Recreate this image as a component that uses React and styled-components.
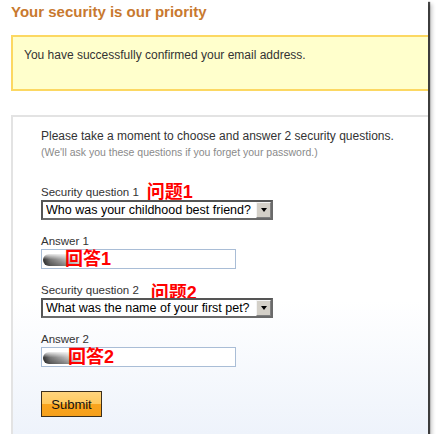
import React from "react";
import styled, { createGlobalStyle } from "styled-components";

const Global = createGlobalStyle`
  html, body { margin: 0; padding: 0; background: #ffffff; }
  body { font-family: "Liberation Sans", Arial, sans-serif; }
  * { box-sizing: border-box; }
`;

const Frame = styled.div`
  width: 428px;
  height: 434px;
  background: #fff;
  overflow: hidden;
  display: flex;
  flex-direction: column;
  box-shadow: 2px 2px 1px rgba(0,0,0,0.7), 4px 4px 4px rgba(0,0,0,0.22);
`;

const Title = styled.h1`
  margin: 0;
  padding: 2px 0 0 11px;
  font-size: 15px;
  line-height: 19px;
  font-weight: bold;
  color: #c8792f;
`;

const Notice = styled.div`
  margin: 14px -20px 0 11px;
  height: 56px;
  border: 2px solid #fcd862;
  background: #ffffcc;
  padding: 11px 11px 0 11px;
  font-size: 12px;
  line-height: 15px;
  color: #333;
`;

const FormBox = styled.form`
  flex: 1;
  margin: 24px -20px 0 11px;
  border-top: 2px solid #e3e3e3;
  border-left: 2px solid #e3e3e3;
  background: linear-gradient(to bottom, #ffffff 0%, #ffffff 58%, #eef3fb 100%);
  padding: 12px 0 0 28px;
  display: flex;
  flex-direction: column;
  align-items: flex-start;
`;

const Intro = styled.p`
  margin: 0;
  font-size: 12px;
  line-height: 15px;
  color: #333;
`;

const Note = styled.p`
  margin: 2px 0 0 0;
  font-size: 10.5px;
  line-height: 13px;
  color: #8a8a8a;
`;

const Field = styled.div`
  display: flex;
  flex-direction: column;
  align-items: flex-start;
  margin-top: ${p => p.$gap}px;
`;

const Label = styled.label`
  display: flex;
  align-items: center;
  height: 13px;
  font-size: 11.5px;
  line-height: 13px;
  color: #333;
`;

const Annotation = styled.span`
  font-family: "Liberation Sans", "Noto Sans CJK SC", sans-serif;
  font-weight: bold;
  font-size: 18px;
  line-height: 13px;
  color: #ff0000;
  margin-left: ${p => p.$shift}px;
  transform: translateY(${p => p.$drop}px);
`;

const SelectWrap = styled.div`
  position: relative;
  margin-top: 1px;
`;

const Select = styled.select`
  appearance: none;
  -webkit-appearance: none;
  width: 232px;
  height: 20px;
  margin: 0;
  padding: 0 0 0 3px;
  border: 2px solid #555;
  border-right-color: #6a6a6a;
  border-bottom-color: #6a6a6a;
  border-radius: 0;
  background: #fff;
  font-family: "Liberation Sans", Arial, sans-serif;
  font-size: 12.5px;
  color: #000;
  outline: none;
`;

const ArrowButton = styled.span`
  position: absolute;
  top: 2px;
  right: 2px;
  width: 15px;
  height: 16px;
  background: #d4d0c8;
  border-top: 1px solid #f4f4f4;
  border-left: 1px solid #f4f4f4;
  border-right: 1px solid #808080;
  border-bottom: 1px solid #808080;
  pointer-events: none;
  display: flex;
  align-items: center;
  justify-content: center;
  &::after {
    content: "";
    width: 0;
    height: 0;
    border-left: 3.5px solid transparent;
    border-right: 3.5px solid transparent;
    border-top: 4px solid #000;
  }
`;

const InputWrap = styled.div`
  position: relative;
  margin-top: 1px;
`;

const Input = styled.input`
  width: 195px;
  height: 20px;
  margin: 0;
  border: 1px solid #a9bdd6;
  background: #fff;
  padding: 0 4px;
  outline: none;
`;

const Overlay = styled.div`
  position: absolute;
  left: 2px;
  top: 0;
  bottom: 0;
  display: flex;
  align-items: center;
  pointer-events: none;
`;

const Pill = styled.span`
  width: 38px;
  height: 12px;
  margin-top: 2px;
  border-radius: 7px 0 0 7px;
  background:
    linear-gradient(to bottom, rgba(255,255,255,0.85) 0%, rgba(255,255,255,0) 45%, rgba(0,0,0,0.3) 100%),
    linear-gradient(to right, #333 0%, #7a7a7a 20%, #b0b0b0 55%, rgba(200,200,200,0) 100%);
`;

const AnswerMark = styled.span`
  font-family: "Liberation Sans", "Noto Sans CJK SC", sans-serif;
  font-weight: bold;
  font-size: 18px;
  line-height: 18px;
  color: #ff0000;
  margin-left: ${p => p.$shift}px;
`;

const SubmitButton = styled.button`
  margin-top: 24px;
  width: 61px;
  height: 26px;
  padding: 0;
  border: 1px solid #3b2f1d;
  border-radius: 0;
  background: linear-gradient(to bottom, #ffd47e 0%, #ffc95e 48%, #f9a41e 52%, #f6a01b 100%);
  font-family: "Liberation Sans", Arial, sans-serif;
  font-size: 13px;
  font-weight: normal;
  color: #111;
  cursor: pointer;
`;

function QuestionField({ gap, label, mark, shift, drop, value }) {
  return (
    <Field $gap={gap}>
      <Label>
        {label}
        <Annotation $shift={shift} $drop={drop}>{mark}</Annotation>
      </Label>
      <SelectWrap>
        <Select defaultValue={value}>
          <option>{value}</option>
        </Select>
        <ArrowButton />
      </SelectWrap>
    </Field>
  );
}

function AnswerField({ gap, label, mark, shift }) {
  return (
    <Field $gap={gap}>
      <Label>{label}</Label>
      <InputWrap>
        <Input type="text" />
        <Overlay>
          <Pill />
          <AnswerMark $shift={shift}>{mark}</AnswerMark>
        </Overlay>
      </InputWrap>
    </Field>
  );
}

export default function App() {
  return (
    <>
      <Global />
      <Frame>
        <Title>Your security is our priority</Title>
        <Notice>You have successfully confirmed your email address.</Notice>
        <FormBox onSubmit={e => e.preventDefault()}>
          <Intro>Please take a moment to choose and answer 2 security questions.</Intro>
          <Note>(We'll ask you these questions if you forget your password.)</Note>
          <QuestionField gap={27} label="Security question 1" mark="问题1" shift={8} drop={0} value="Who was your childhood best friend?" />
          <AnswerField gap={15} label="Answer 1" mark="回答1" shift={-16} />
          <QuestionField gap={15} label="Security question 2" mark="问题2" shift={12} drop={3} value="What was the name of your first pet?" />
          <AnswerField gap={15} label="Answer 2" mark="回答2" shift={-13} />
          <SubmitButton type="submit">Submit</SubmitButton>
        </FormBox>
      </Frame>
    </>
  );
}
